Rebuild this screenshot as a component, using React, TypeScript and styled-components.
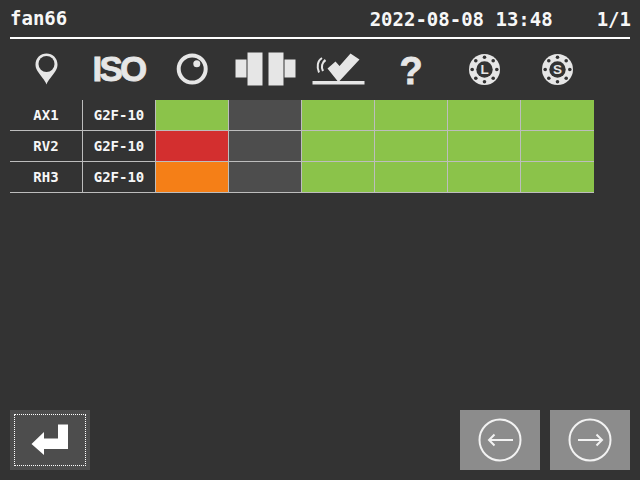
import React from "react";
import styled, { createGlobalStyle } from "styled-components";

const Global = createGlobalStyle`
  html, body { margin: 0; padding: 0; background: #333333; }
  body { font-family: "DejaVu Sans Mono", monospace; }
`;

const Page = styled.div`
  width: 640px;
  height: 480px;
  box-sizing: border-box;
  padding: 0 10px 10px;
  display: flex;
  flex-direction: column;
  background: #333333;
  overflow: hidden;
`;

const Header = styled.header`
  height: 37px;
  box-sizing: content-box;
  display: flex;
  align-items: center;
  border-bottom: 2px solid #ffffff;
  color: #f7f7f7;
  font-size: 19px;
  font-weight: bold;
  line-height: 22px;
`;

const Title = styled.span`
  margin-right: auto;
  position: relative;
  top: -1px;
`;

const Clock = styled.span`
  margin-right: 44px;
`;

const Pager = styled.span`
  margin-right: -1px;
`;

const IconRow = styled.div`
  display: grid;
  grid-template-columns: repeat(8, 73px);
  height: 61px;
  align-items: center;
  justify-items: center;
`;

const Icon = styled.svg.attrs({ viewBox: "1 -3 60 48" })`
  display: block;
  width: 60px;
  height: 48px;
  overflow: visible;
`;

const Table = styled.div`
  display: grid;
  grid-template-columns: repeat(8, 73px);
  grid-auto-rows: 31px;
  width: 584px;
`;

const Cell = styled.div<{ $bg?: string; $last?: boolean }>`
  box-sizing: border-box;
  display: flex;
  align-items: center;
  justify-content: center;
  background: ${(p) => p.$bg ?? "transparent"};
  border-bottom: 1px solid #bdbdbd;
  border-right: ${(p) => (p.$last ? "none" : "1px solid #bdbdbd")};
  color: #f7f7f7;
  font-size: 14px;
  font-weight: bold;
`;

const Footer = styled.footer`
  margin-top: auto;
  display: flex;
  gap: 10px;
`;

const BackButton = styled.button`
  width: 80px;
  height: 60px;
  margin-right: auto;
  padding: 4px;
  border: none;
  background: #4d4d4d;
  display: flex;
`;

const FocusRing = styled.span`
  flex: 1;
  border: 1px dotted #ffffff;
  display: flex;
  align-items: center;
  justify-content: center;
`;

const NavButton = styled.button`
  width: 80px;
  height: 60px;
  padding: 0;
  border: none;
  background: #8c8c8c;
  display: flex;
  align-items: center;
  justify-content: center;
`;

const ICON = "#e6e6e6";
const BG = "#333333";

const Bolts = () => (
  <>
    {[0, 45, 90, 135, 180, 225, 270, 315].map((a) => {
      const r = (a * Math.PI) / 180;
      return <circle key={a} cx={30.5 + 12.3 * Math.cos(r)} cy={20.5 + 12.3 * Math.sin(r)} r={1.8} fill={BG} />;
    })}
  </>
);

const Flange = ({ letter }: { letter: string }) => (
  <Icon>
    <circle cx="30.5" cy="20.5" r="15.5" fill={ICON} />
    <Bolts />
    <circle cx="30.5" cy="20.5" r="8.2" fill={BG} />
    <text x="30.5" y="25.3" textAnchor="middle" fontFamily="Liberation Sans" fontWeight="bold" fontSize="13.5" fill={ICON}>
      {letter}
    </text>
  </Icon>
);

const icons = [
  <Icon key="pin">
    <path
      d="M30.5 35.5 C29 31 24.5 27 21.5 22 C20 19.8 19.5 17.5 19.5 15.5 C19.5 9 24.5 4.5 30.5 4.5 C36.5 4.5 41.5 9 41.5 15.5 C41.5 17.5 41 19.8 39.5 22 C36.5 27 32 31 30.5 35.5 Z"
      fill={ICON}
    />
    <circle cx="30.5" cy="15" r="8" fill={BG} />
  </Icon>,
  <Icon key="iso">
    <text x="29.5" y="32" textAnchor="middle" fontFamily="Liberation Sans" fontWeight="bold" fontSize="35" letterSpacing="-2.7" stroke={ICON} strokeWidth="0.8" fill={ICON}>
      ISO
    </text>
  </Icon>,
  <Icon key="lens">
    <circle cx="30.2" cy="20" r="13.5" fill="none" stroke={ICON} strokeWidth="4" />
    <circle cx="34.8" cy="14.8" r="3.5" fill={ICON} />
  </Icon>,
  <Icon key="blocks">
    <rect x="0.5" y="10.5" width="11" height="18" fill={ICON} />
    <rect x="12.5" y="3.5" width="15" height="33" fill={ICON} />
    <rect x="33.5" y="3.5" width="15" height="33" fill={ICON} />
    <rect x="49.5" y="10.5" width="11" height="18" fill={ICON} />
  </Icon>,
  <Icon key="check">
    <rect x="4.5" y="32" width="52" height="3.5" fill={ICON} />
    <path d="M19.5 19.5 L27.5 12.5 L31.5 17 L42.5 4.5 L51.5 10.5 L31.5 32 L29.5 32 Z" fill={ICON} />
    <path d="M17.5 11 C14 13.5 13 18 15 22" fill="none" stroke={ICON} strokeWidth="2.2" />
    <path d="M14 9 C9.5 11.5 8.5 18 11 23.5" fill="none" stroke={ICON} strokeWidth="2" />
  </Icon>,
  <Icon key="help">
    <text x="30" y="34.5" textAnchor="middle" fontFamily="Liberation Sans" fontWeight="bold" fontSize="38" stroke={ICON} strokeWidth="0.8" fill={ICON}>
      ?
    </text>
  </Icon>,
  <Flange letter="L" key="l" />,
  <Flange letter="S" key="s" />,
];

const rows = [
  { name: "AX1", status: "#8bc34a" },
  { name: "RV2", status: "#d32f2f" },
  { name: "RH3", status: "#f57f17" },
];

const GREEN = "#8bc34a";

export default function App() {
  return (
    <Page>
      <Global />
      <Header>
        <Title>fan66</Title>
        <Clock>2022-08-08 13:48</Clock>
        <Pager>1/1</Pager>
      </Header>
      <IconRow>{icons}</IconRow>
      <Table>
        {rows.map((r) => (
          <React.Fragment key={r.name}>
            <Cell>{r.name}</Cell>
            <Cell>G2F-10</Cell>
            <Cell $bg={r.status} />
            <Cell $bg="#4d4d4d" />
            <Cell $bg={GREEN} />
            <Cell $bg={GREEN} />
            <Cell $bg={GREEN} />
            <Cell $bg={GREEN} $last />
          </React.Fragment>
        ))}
      </Table>
      <Footer>
        <BackButton>
          <FocusRing>
            <svg width="38" height="32" viewBox="0 0 38 32">
              <path d="M0.5 20 L13 8 L13 14.5 L27 14.5 L27 0.5 L37 0.5 L37 25 L13 25 L13 31 Z" fill="#ffffff" />
            </svg>
          </FocusRing>
        </BackButton>
        <NavButton>
          <svg width="44" height="44" viewBox="0 0 44 44" fill="none" stroke="#f2f2f2" strokeWidth="2">
            <circle cx="22" cy="22" r="20.5" />
            <path d="M35 22 H11 M16.5 16.5 L11 22 L16.5 27.5" />
          </svg>
        </NavButton>
        <NavButton>
          <svg width="44" height="44" viewBox="0 0 44 44" fill="none" stroke="#f2f2f2" strokeWidth="2">
            <circle cx="22" cy="22" r="20.5" />
            <path d="M10 22 H34 M28.5 16.5 L34 22 L28.5 27.5" />
          </svg>
        </NavButton>
      </Footer>
    </Page>
  );
}
